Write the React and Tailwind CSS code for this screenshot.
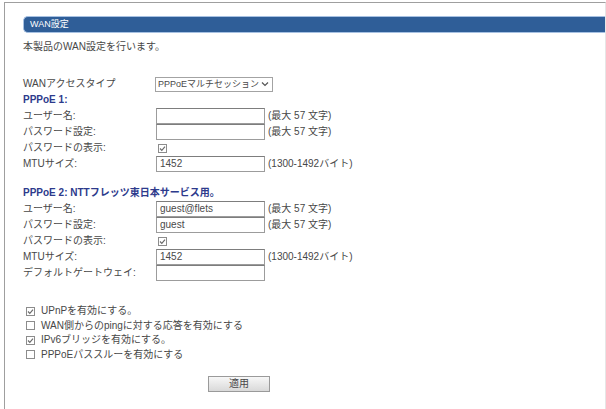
import React from "react";

const CheckBox = ({ checked }) => (
  <svg className="w-[9px] h-[9px] shrink-0" viewBox="0 0 9 9">
    <rect x="0.5" y="0.5" width="8" height="8" fill="#fff" stroke="#8c8c8c" />
    {checked && (
      <path d="M2 4.5 L3.8 6.3 L7 2.6" fill="none" stroke="#6b6b6b" strokeWidth="1.2" />
    )}
  </svg>
);

const TextBox = ({ value }) => (
  <div className="w-[109px] h-[16px] border border-[#9c9c9c] border-t-[#7d7d7d] bg-white pl-[3px] flex items-center text-[10px] text-[#4a4a4a]">
    {value}
  </div>
);

const Row = ({ label, children }) => (
  <div className="flex items-center h-[16px]">
    <div className="w-[133px] text-[10px] text-[#474747]">{label}</div>
    {children}
  </div>
);

const Note = ({ children }) => (
  <span className="ml-[3px] text-[10px] text-[#474747] whitespace-nowrap">{children}</span>
);

const Heading = ({ children }) => (
  <div className="h-[16px] flex items-center text-[10px] font-bold text-[#2d3a8c]">
    {children}
  </div>
);

const Option = ({ checked, label }) => (
  <div className="flex items-center h-[14.5px] pl-[3px] gap-[6px] text-[10px] text-[#474747]">
    <CheckBox checked={checked} />
    <span>{label}</span>
  </div>
);

export default function App() {
  return (
    <div className="w-[606px] h-[409px] bg-white pt-[2px] pl-[4px] font-['Liberation_Sans','Noto_Sans_CJK_JP',sans-serif] leading-none">
      <div className="h-full border-t border-l border-r border-[#9f9f9f] border-r-[#e6e6e6] pl-[18px] pt-[13px]">
        <div className="h-[17px] rounded-l-[5px] bg-[#2f5e98] border border-r-0 border-[#a7c1e2] flex items-center pl-[6px] text-[9px] text-white">
          WAN設定
        </div>

        <div className="mt-[7px] h-[14px] flex items-center text-[10px] text-[#474747]">
          本製品のWAN設定を行います。
        </div>

        <div className="mt-[22px]">
          <Row label="WANアクセスタイプ">
            <div className="-ml-[1px] w-[118px] h-[15px] border border-[#a3a3a3] bg-white flex items-center justify-between pl-[2px] pr-[3px] text-[9px] text-[#4a4a4a] whitespace-nowrap overflow-hidden">
              <span>PPPoEマルチセッション</span>
              <svg className="w-[8px] h-[6px] shrink-0" viewBox="0 0 8 6">
                <path d="M1 1.5 L4 4.5 L7 1.5" fill="none" stroke="#555" strokeWidth="1.2" />
              </svg>
            </div>
          </Row>
          <Heading>PPPoE 1:</Heading>
          <Row label="ユーザー名:">
            <TextBox value="" />
            <Note>(最大 57 文字)</Note>
          </Row>
          <Row label="パスワード設定:">
            <TextBox value="" />
            <Note>(最大 57 文字)</Note>
          </Row>
          <Row label="パスワードの表示:">
            <div className="ml-[2px]">
              <CheckBox checked />
            </div>
          </Row>
          <Row label="MTUサイズ:">
            <TextBox value="1452" />
            <Note>(1300-1492バイト)</Note>
          </Row>
        </div>

        <div className="mt-[13px]">
          <Heading>PPPoE 2: NTTフレッツ東日本サービス用。</Heading>
          <Row label="ユーザー名:">
            <TextBox value="guest@flets" />
            <Note>(最大 57 文字)</Note>
          </Row>
          <Row label="パスワード設定:">
            <TextBox value="guest" />
            <Note>(最大 57 文字)</Note>
          </Row>
          <Row label="パスワードの表示:">
            <div className="ml-[2px]">
              <CheckBox checked />
            </div>
          </Row>
          <Row label="MTUサイズ:">
            <TextBox value="1452" />
            <Note>(1300-1492バイト)</Note>
          </Row>
          <Row label="デフォルトゲートウェイ:">
            <TextBox value="" />
          </Row>
        </div>

        <div className="mt-[23px]">
          <Option checked label="UPnPを有効にする。" />
          <Option label="WAN側からのpingに対する応答を有効にする" />
          <Option checked label="IPv6ブリッジを有効にする。" />
          <Option label="PPPoEパススルーを有効にする" />
        </div>

        <div className="mt-[14px] ml-[185px]">
          <button className="w-[62px] h-[16px] border border-[#9a9a9a] bg-gradient-to-b from-[#f7f7f7] to-[#d9d9d9] text-[10px] text-[#474747] flex items-center justify-center">
            適用
          </button>
        </div>
      </div>
    </div>
  );
}
